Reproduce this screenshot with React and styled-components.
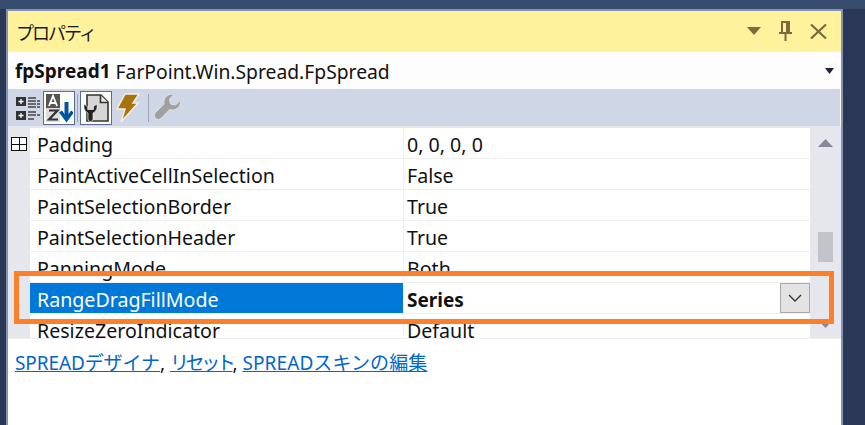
import React from "react";
import styled, { createGlobalStyle } from "styled-components";

const FONT = `"Noto Sans", "Noto Sans CJK JP", "Open Sans", sans-serif`;

const Global = createGlobalStyle`
  html, body { margin: 0; padding: 0; }
  body { width: 865px; height: 425px; overflow: hidden; font-family: ${FONT}; }
`;

const Page = styled.div`
  width: 865px;
  height: 425px;
  box-sizing: border-box;
  padding: 9px 22px 0 6px;
  background: linear-gradient(#384c6e 0 9px, #2a3856 9px);
  position: relative;
`;

const Panel = styled.div`
  height: 416px;
  box-sizing: border-box;
  border: 2px solid #8492b5;
  border-bottom: 0;
  background: #fff;
  display: flex;
  flex-direction: column;
`;

const TitleBar = styled.div`
  height: 41px;
  flex: none;
  background: #fff29d;
  display: flex;
  align-items: center;
  padding: 0 14px 0 8px;
  box-sizing: border-box;
  color: #1a1a1a;
  font-size: 18px;
`;

const Title = styled.span`
  flex: 1;
  letter-spacing: -2px;
`;

const TitleIcons = styled.div`
  display: flex;
  align-items: center;
  gap: 18px;
  margin-top: -1px;
`;

const ComboRow = styled.div`
  height: 37px;
  flex: none;
  background: #fdfdfd;
  display: flex;
  align-items: center;
  padding: 1px 7px 0 7px;
  box-sizing: border-box;
  font-size: 19.3px;
  color: #111;
`;

const ObjectName = styled.b`
  font-size: 19px;
  font-weight: 700;
  margin-right: 5px;
`;

const ObjectType = styled.span`
  flex: 1;
`;

const Toolbar = styled.div`
  height: 37px;
  flex: none;
  margin-right: 1px;
  background: #cfd6e5;
  display: flex;
  align-items: center;
  padding-left: 6px;
`;

const ToolButton = styled.div`
  width: ${(p) => p.$w || 32}px;
  height: 34px;
  box-sizing: border-box;
  display: flex;
  align-items: center;
  justify-content: center;
  margin-right: ${(p) => p.$mr || 0}px;
  border: 1px solid ${(p) => (p.$active ? "#5a6d92" : "transparent")};
  background: ${(p) => (p.$active ? "#fcfcf6" : "transparent")};
`;

const ToolSep = styled.div`
  width: 1px;
  height: 28px;
  background: #9aa5bd;
  margin: 0 ${(p) => p.$r || 2}px 0 2px;
`;

const GridArea = styled.div`
  height: 213px;
  flex: none;
  box-sizing: border-box;
  padding-top: 2px;
  background: #e6e7ed;
  display: flex;
  border-bottom: 1px solid #f0f0f0;
`;

const Rows = styled.div`
  width: 802px;
  flex: none;
  overflow: hidden;
`;

const Row = styled.div`
  display: grid;
  grid-template-columns: 22px 374px 1fr;
  height: 31px;
  box-sizing: border-box;
  font-size: 19.6px;
  color: #111;
`;

const Gutter = styled.div`
  background: #e6e7ed;
  padding: 9px 0 0 3px;
`;

const Expander = styled.div`
  width: 16px;
  height: 14px;
  box-sizing: border-box;
  border: 1px solid #111;
  background:
    linear-gradient(#111, #111) center / 100% 1px no-repeat,
    linear-gradient(#111, #111) center / 1px 100% no-repeat,
    #fff;
`;

const NameCell = styled.div`
  display: flex;
  align-items: center;
  padding: 3px 0 0 7px;
  white-space: nowrap;
  border-right: 1px solid #f0f0f0;
  border-bottom: 1px solid #f0f0f0;
  background: ${(p) => (p.$selected ? "#0078d7" : "#fff")};
  color: ${(p) => (p.$selected ? "#fff" : "#111")};
`;

const ValueCell = styled.div`
  display: flex;
  align-items: center;
  justify-content: space-between;
  padding-left: 3px;
  font-size: ${(p) => (p.$bold ? 19 : 19.6)}px;
  font-weight: ${(p) => (p.$bold ? 700 : 400)};
  background: #fff;
  border-bottom: 1px solid #f0f0f0;
`;

const ValueText = styled.span`
  padding-top: 3px;
`;

const DropButton = styled.div`
  width: 30px;
  height: 30px;
  box-sizing: border-box;
  border: 1px solid #aaa;
  background: #e3e3e3;
  display: flex;
  align-items: center;
  justify-content: center;
`;

const ScrollBar = styled.div`
  flex: 1;
  display: flex;
  flex-direction: column;
  align-items: center;
  padding-right: 1px;
`;

const ScrollGap = styled.div`
  height: ${(p) => p.$h}px;
  flex: none;
`;

const Thumb = styled.div`
  width: 15px;
  height: 30px;
  flex: none;
  background: #c2c3c9;
`;

const Commands = styled.div`
  padding: 11px 0 0 7px;
  font-size: 19px;
  line-height: 26px;
  color: #111;
  white-space: nowrap;
`;

const CmdLink = styled.a`
  color: #0066cc;
  text-decoration: underline;
  letter-spacing: ${(p) => p.$ls || 0}px;
`;

const Highlight = styled.div`
  position: absolute;
  left: 14px;
  top: 271px;
  width: 820px;
  height: 53px;
  box-sizing: border-box;
  border: 5px solid #fe7f2a;
  pointer-events: none;
`;

const Tri = ({ w, h, fill, up }) => (
  <svg width={w} height={h} viewBox={`0 0 ${w} ${h}`}>
    <polygon points={up ? `0,${h} ${w},${h} ${w / 2},0` : `0,0 ${w},0 ${w / 2},${h}`} fill={fill} />
  </svg>
);

const PinIcon = () => (
  <svg width="13" height="20" viewBox="0 0 13 20">
    <path d="M0 12h13M3 1h7v11H3zM8 1v11M6.500 12v8" fill="none" stroke="#7b6a3e" strokeWidth="2" />
  </svg>
);

const CloseIcon = () => (
  <svg width="17" height="15" viewBox="0 0 17 15">
    <path d="M1 0.500l15 14M16 0.500l-15 14" fill="none" stroke="#7b6a3e" strokeWidth="2.200" />
  </svg>
);

const CategoryIcon = () => (
  <svg width="26" height="26" viewBox="0 0 26 26">
    <g fill="#333">
      <rect x="0" y="2" width="10" height="9" />
      <rect x="0" y="16" width="10" height="9" />
    </g>
    <path d="M2.500 6.500h5M5 4v5M2.500 20.500h5M5 18v5" stroke="#fff" strokeWidth="1.300" />
    <path d="M12 3h8M12 6h12M12 9h12M12 12h12M12 17h8M12 20h12M12 24h6" stroke="#444" strokeWidth="1.300" strokeDasharray="8 1" />
  </svg>
);

const SortIcon = () => (
  <svg width="28" height="30" viewBox="0 0 28 30">
    <rect x="1" y="1" width="14" height="14" fill="#555" />
    <rect x="1" y="15" width="14" height="14" fill="#ddd" />
    <path d="M4 13L8 3l4 10M5.500 10h5" fill="none" stroke="#fff" strokeWidth="1.800" />
    <path d="M4 17.500h8.500L4 26.500h9" fill="none" stroke="#333" strokeWidth="2.200" />
    <path d="M21.500 9v17" stroke="#00539c" strokeWidth="4" />
    <path d="M15.500 18.500l6 8 6-8" fill="none" stroke="#00539c" strokeWidth="3.500" />
  </svg>
);

const PageIcon = () => (
  <svg width="28" height="30" viewBox="0 0 28 30">
    <path d="M5 2h14l7 7v19H5z" fill="#d6d6d6" stroke="#333" strokeWidth="1.600" />
    <path d="M18.500 2v7.500H26" fill="#eee" stroke="#333" strokeWidth="1.600" />
    <path d="M2 11v4a6.500 6.500 0 0 0 4 5v6a2.500 2.500 0 0 0 5 0v-6a6.500 6.500 0 0 0 4-5v-4l-3.500 2.500v3h-6v-3z" fill="#222" stroke="#fcfcf6" strokeWidth="0.600" />
  </svg>
);

const BoltIcon = () => (
  <svg width="24" height="30" viewBox="0 0 24 30">
    <path d="M9 1h14l-6 9h5L5 29l4-13H1z" fill="#a8720c" stroke="#f2efe6" strokeWidth="1.500" />
  </svg>
);

const WrenchIcon = () => (
  <svg width="28" height="28" viewBox="0 0 28 28">
    <path
      d="M27.500 8a8 8 0 0 1-10.800 7.500L8 24.500a4 4 0 0 1-5.500-.2 4 4 0 0 1-.2-5.500L11 9.800A8 8 0 0 1 21 .5L16.500 5l1 5 5 1L27 6.500z"
      fill="#a0a0a0"
      stroke="#dfe2ea"
      strokeWidth="1"
    />
  </svg>
);

const ChevronIcon = () => (
  <svg width="14" height="8" viewBox="0 0 14 8">
    <path d="M1 1l6 6 6-6" fill="none" stroke="#333" strokeWidth="1.300" />
  </svg>
);

const rows = [
  { name: "Padding", value: "0, 0, 0, 0", expandable: true },
  { name: "PaintActiveCellInSelection", value: "False" },
  { name: "PaintSelectionBorder", value: "True" },
  { name: "PaintSelectionHeader", value: "True" },
  { name: "PanningMode", value: "Both" },
  { name: "RangeDragFillMode", value: "Series", selected: true },
  { name: "ResizeZeroIndicator", value: "Default" },
];

export default function App() {
  return (
    <Page>
      <Global />
      <Panel>
        <TitleBar>
          <Title>プロパティ</Title>
          <TitleIcons>
            <Tri w={14} h={8} fill="#7b6a3e" />
            <PinIcon />
            <CloseIcon />
          </TitleIcons>
        </TitleBar>
        <ComboRow>
          <ObjectName>fpSpread1</ObjectName>
          <ObjectType>FarPoint.Win.Spread.FpSpread</ObjectType>
          <Tri w={9} h={6} fill="#1c2433" />
        </ComboRow>
        <Toolbar>
          <ToolButton $w={29}>
            <CategoryIcon />
          </ToolButton>
          <ToolButton $active>
            <SortIcon />
          </ToolButton>
          <ToolSep />
          <ToolButton $active $mr={3}>
            <PageIcon />
          </ToolButton>
          <ToolButton $w={26} $mr={5}>
            <BoltIcon />
          </ToolButton>
          <ToolSep $r={3} />
          <ToolButton $w={30}>
            <WrenchIcon />
          </ToolButton>
        </Toolbar>
        <GridArea>
          <Rows>
            {rows.map((r) => (
              <Row key={r.name}>
                <Gutter>{r.expandable && <Expander />}</Gutter>
                <NameCell $selected={r.selected}>{r.name}</NameCell>
                <ValueCell $bold={r.selected}>
                  <ValueText>{r.value}</ValueText>
                  {r.selected && (
                    <DropButton>
                      <ChevronIcon />
                    </DropButton>
                  )}
                </ValueCell>
              </Row>
            ))}
          </Rows>
          <ScrollBar>
            <ScrollGap $h={11} />
            <Tri w={15} h={8} fill="#868999" up />
            <ScrollGap $h={85} />
            <Thumb />
            <ScrollGap $h={59} />
            <Tri w={13} h={7} fill="#868999" />
          </ScrollBar>
        </GridArea>
        <Commands>
          <CmdLink $ls={-0.1}>SPREADデザイナ</CmdLink>,{" "}
          <CmdLink $ls={-3.4}>リセット</CmdLink>,{" "}
          <CmdLink $ls={0.1}>SPREADスキンの編集</CmdLink>
        </Commands>
      </Panel>
      <Highlight />
    </Page>
  );
}
